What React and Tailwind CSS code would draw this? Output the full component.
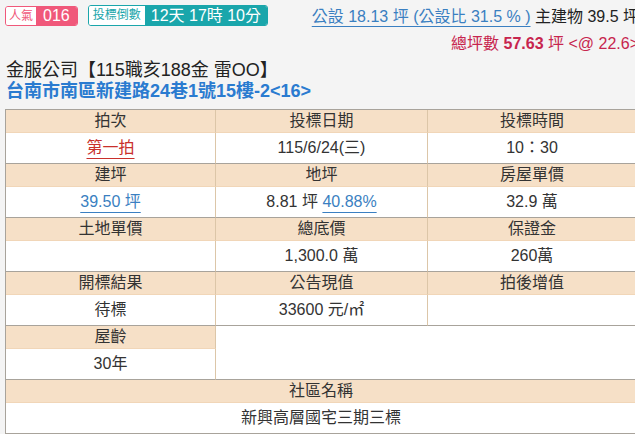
import React from 'react';

const head = 'h-[23px] bg-[#f6e0c7] border-b border-b-[#f1d6b8] border-r border-r-[#dcc6a8] flex items-center justify-center text-[#333]';
const cell = 'h-[31px] bg-white border-b border-b-[#a8a39b] border-r border-r-[#dcc6a8] flex items-center justify-center text-[#333]';
const link = 'text-[#3a7fc1] underline decoration-[#3a7fc1] underline-offset-[5px]';

const rows = [
  {
    heads: ['拍次', '投標日期', '投標時間'],
    vals: [
      <span className="text-[#c9302c] underline decoration-[#c9302c] underline-offset-[5px]">第一拍</span>,
      '115/6/24(三)',
      '10：30',
    ],
  },
  {
    heads: ['建坪', '地坪', '房屋單價'],
    vals: [
      <span className={link}>39.50 坪</span>,
      <span>
        8.81 坪 <span className={link}>40.88%</span>
      </span>,
      '32.9 萬',
    ],
  },
  {
    heads: ['土地單價', '總底價', '保證金'],
    vals: ['', '1,300.0 萬', '260萬'],
  },
  {
    heads: ['開標結果', '公告現值', '拍後增值'],
    vals: ['待標', '33600 元/㎡', ''],
  },
];

export default function App() {
  return (
    <div className="w-[635px] h-[434px] overflow-hidden bg-[#f4f4f4] font-['Liberation_Sans','Noto_Sans_CJK_TC',sans-serif] text-[#333]">
      <div className="flex items-start justify-between pl-[5px] pt-[5px] w-[639px]">
        <div className="flex items-center gap-[10px]">
          <div className="flex h-[20px] rounded-[3px] border border-[#f0587a] overflow-hidden">
            <span className="bg-white text-[#f0587a] text-[12px] leading-[18px] px-[3px]">人氣</span>
            <span className="bg-[#f0587a] text-white text-[16px] leading-[18px] px-[7px]">016</span>
          </div>
          <div className="flex h-[21px] rounded-[3px] border border-[#1aa6ab] overflow-hidden">
            <span className="bg-white text-[#1aa6ab] text-[12px] leading-[19px] px-[4px]">投標倒數</span>
            <span className="bg-[#1aa6ab] text-white text-[16px] leading-[19px] px-[6px]">12天 17時 10分</span>
          </div>
        </div>
        <div className="flex flex-col items-end pt-[1px]">
          <div className="text-[16px] leading-[22px] whitespace-nowrap">
            <span className="text-[#3a7fc1] underline decoration-[#3a7fc1] underline-offset-[4px]">公設 18.13 坪 (公設比 31.5 % )</span>{' '}
            <span className="text-[#222]">主建物 39.5 坪</span>
          </div>
          <div className="text-[16px] leading-[22px] mt-[5px] whitespace-nowrap text-[#c7254e]">
            總坪數 <b>57.63</b> 坪 &lt;@ 22.6&gt;
          </div>
        </div>
      </div>
      <div className="pl-[6px] mt-[5px] text-[18px] leading-[21px] text-[#222]">金服公司【115職亥188金 雷OO】</div>
      <div className="pl-[6px] text-[18px] leading-[21px] font-bold text-[#2a7bd0]">台南市南區新建路24巷1號15樓-2&lt;16&gt;</div>
      <div className="ml-[5px] mt-[7px] w-[631px] grid grid-cols-[210px_212px_209px] border-l border-t border-[#a8a39b] text-[16px]">
        {rows.map((r, i) => (
          <React.Fragment key={i}>
            {r.heads.map((h, j) => (
              <div key={'h' + j} className={head}>{h}</div>
            ))}
            {r.vals.map((v, j) => (
              <div key={'v' + j} className={cell}>{v}</div>
            ))}
          </React.Fragment>
        ))}
        <div className={head}>屋齡</div>
        <div className="row-span-2 col-span-2 bg-white border-b border-b-[#a8a39b] border-r border-r-[#dcc6a8]"></div>
        <div className={cell}>30年</div>
        <div className={`${head} col-span-3`}>社區名稱</div>
        <div className={`${cell} col-span-3`}>新興高層國宅三期三標</div>
      </div>
    </div>
  );
}
